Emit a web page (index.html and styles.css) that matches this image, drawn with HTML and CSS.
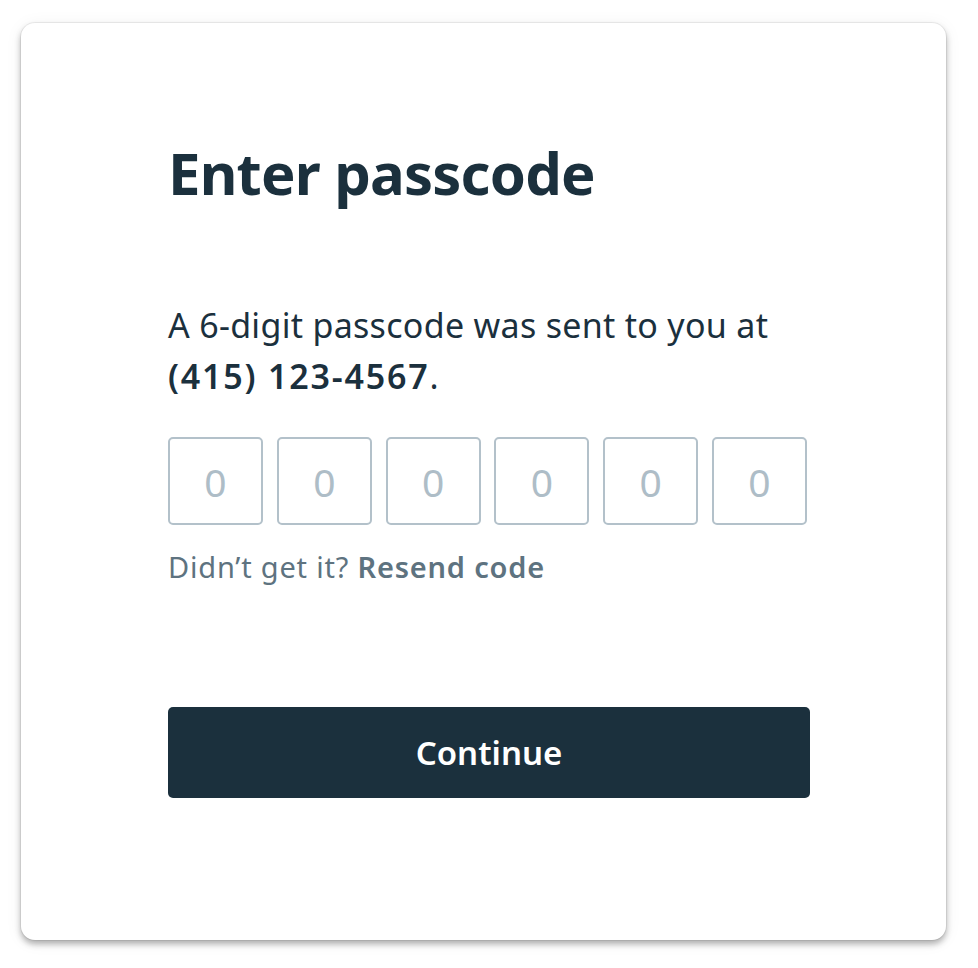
FILE: index.html
```html
<!DOCTYPE html>
<html lang="en">
<head>
<meta charset="utf-8">
<title>Enter passcode</title>
<link rel="stylesheet" href="styles.css">
</head>
<body>
<main class="card">
  <h1 class="title">Enter passcode</h1>
  <p class="lead">A 6-digit passcode was sent to you at<br><strong class="phone">(415) 123-4567</strong>.</p>
  <div class="code">
    <input class="digit" type="text" maxlength="1" placeholder="0">
    <input class="digit" type="text" maxlength="1" placeholder="0">
    <input class="digit" type="text" maxlength="1" placeholder="0">
    <input class="digit" type="text" maxlength="1" placeholder="0">
    <input class="digit" type="text" maxlength="1" placeholder="0">
    <input class="digit" type="text" maxlength="1" placeholder="0">
  </div>
  <p class="resend">Didn’t get it? <a class="resend-link" href="#">Resend code</a></p>
  <button class="continue" type="button">Continue</button>
</main>
</body>
</html>
```

FILE: styles.css
```css
html, body {
  margin: 0;
  padding: 0;
  background: #ffffff;
}

body {
  font-family: "Noto Sans", "Open Sans", sans-serif;
  color: #1b303d;
  padding: 23px 32px 27px 21px;
}

.card {
  box-sizing: border-box;
  width: 925px;
  height: 917px;
  background: #ffffff;
  border-radius: 14px;
  box-shadow: 0 0 0 1px rgba(0, 0, 0, 0.06), 0 4px 6px rgba(0, 0, 0, 0.3), 0 2px 18px rgba(0, 0, 0, 0.06);
  padding: 118px 136px 0 147px;
}

.title {
  margin: 0;
  font-size: 58px;
  line-height: 64px;
  font-weight: 700;
  letter-spacing: -0.8px;
}

.lead {
  margin: 95px 0 0;
  font-size: 34px;
  line-height: 51px;
  font-weight: 400;
  letter-spacing: 0.3px;
}

.phone {
  font-weight: 600;
  letter-spacing: 1.8px;
}

.code {
  display: grid;
  grid-template-columns: repeat(6, 95px);
  column-gap: 13.8px;
  margin-top: 35px;
}

.digit {
  box-sizing: border-box;
  width: 95px;
  height: 88px;
  border: 2px solid #b3c1ca;
  border-radius: 5px;
  background: #ffffff;
  font-family: inherit;
  font-size: 39px;
  text-align: center;
  color: #1b303d;
  padding: 0;
  outline: none;
}

.digit::placeholder {
  color: #aebdc7;
  opacity: 1;
}

.resend {
  margin: 22px 0 0;
  font-size: 29px;
  line-height: 40px;
  color: #5e7380;
  letter-spacing: 0.8px;
}

.resend-link {
  color: #5e7380;
  font-weight: 600;
  text-decoration: none;
}

.continue {
  display: block;
  width: 642px;
  height: 91px;
  margin-top: 120px;
  border: none;
  border-radius: 5px;
  background: #1b303d;
  color: #ffffff;
  font-family: inherit;
  font-size: 33px;
  font-weight: 600;
  cursor: pointer;
}
```
